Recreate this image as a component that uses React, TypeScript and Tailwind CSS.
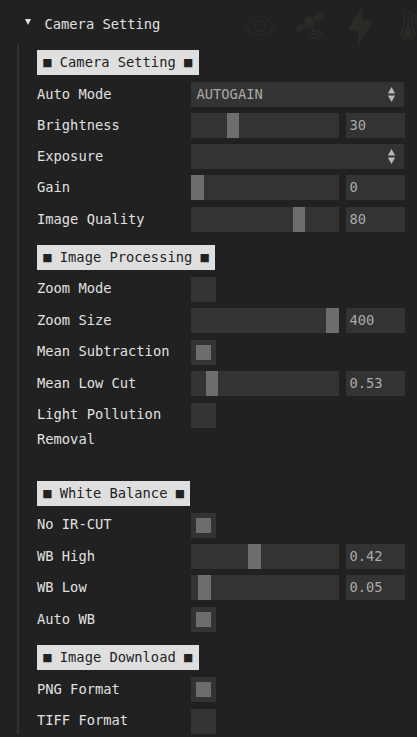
import type { ReactNode } from "react";

function Heading({ children, className }: { children: ReactNode; className: string }) {
  return (
    <div className={"flex " + className}>
      <h2 className="h-[25px] whitespace-pre bg-[#dfdfdf] px-[6.25px] leading-[25px] text-[#222]">■ {children} ■</h2>
    </div>
  );
}

function Row({ label, className, raised = false, children }: { label: string; className: string; raised?: boolean; children: ReactNode }) {
  return (
    <div className={"flex items-start " + className}>
      <div className={"w-[154px] shrink-0 pr-2 leading-[25px] " + (raised ? "-mt-px" : "")}>{label}</div>
      {children}
    </div>
  );
}

function Slider({ left, width = 12, value }: { left: number; width?: number; value: string }) {
  return (
    <div className="flex gap-[7px]">
      <div className="h-[25px] w-[148px] bg-[#333]">
        <div className="h-full bg-[#6d6d6d]" style={{ marginLeft: left, width }} />
      </div>
      <div className="h-[25px] w-[59px] bg-[#333] pl-[3.5px] leading-[25px] text-[#aaa]">{value}</div>
    </div>
  );
}

function Select({ value }: { value: string }) {
  return (
    <div className="flex h-[25px] w-[213px] items-center justify-between bg-[#333] pl-[5.5px] pr-[9px] text-[#aaa]">
      <span className="leading-[25px]">{value}</span>
      <svg width="7" height="15" viewBox="0 0 7 15" fill="#b8b8b8">
        <path d="M3.5 0L7.200 6.500H-0.200z" />
        <path d="M3.5 15L7.200 8.500H-0.200z" />
      </svg>
    </div>
  );
}

function Check({ on = false }: { on?: boolean }) {
  return (
    <div className="flex h-[25px] w-[25px] items-center justify-center bg-[#333]">
      {on && <div className="h-[15px] w-[15px] bg-[#6d6d6d]" />}
    </div>
  );
}

function FaintIcons() {
  return (
    <svg className="absolute left-[240px] top-0" width="177" height="50" viewBox="240 0 177 50" fill="none" stroke="#282926" strokeWidth="1.7">
      <path d="M245.5 26C253 14 267 14 274.500 26C267 38 253 38 245.500 26Z" />
      <circle cx="260" cy="26" r="5.500" />
      <g fill="#282b26" stroke="none">
        <g transform="rotate(-30 310 22)">
          <rect x="305" y="16.500" width="8.500" height="11" rx="1.500" />
          <rect x="294.500" y="19.300" width="9.500" height="5.500" />
          <rect x="314.500" y="19.300" width="11" height="5.500" />
          <rect x="303" y="21" width="13" height="2" />
        </g>
        <circle cx="313.500" cy="30" r="2" />
        <path d="M362 6L347.500 30H358L358.500 46L373 20.500H362.500Z" />
      </g>
      <path d="M311 34Q317.500 35 318.500 29M310 38.200Q321.500 39 322.500 30" stroke="#282b26" />
      <path d="M404 28V15Q404 12 408 12Q412 12 412 15V28A6.800 6.800 0 1 1 404 28Z" stroke="#282b26" />
      <circle cx="408" cy="33.500" r="4.300" fill="#282b26" stroke="none" />
      <path d="M408 16V32M414.500 14.500H417M414.500 18.500H417M414.500 22.500H417M414.500 26.500H417" stroke="#282b26" />
    </svg>
  );
}

export default function App() {
  return (
    <div className="h-[738px] w-[417px] bg-white">
      <div className="relative h-[737px] overflow-hidden bg-[#212121] font-['DejaVu_Sans_Mono','Liberation_Mono',monospace] text-[13.75px] text-[#e0e0e0]">
        <FaintIcons />
        <div className="flex h-[44px] items-center pl-[25px]">
          <svg className="mr-[13.5px]" width="6" height="6" viewBox="0 0 6 6" fill="#e0e0e0">
            <path d="M0 0H6L3 6Z" />
          </svg>
          <span className="mt-[4px] leading-[25px]">Camera Setting</span>
        </div>
        <div className="ml-[17px] h-[690px] border-l-2 border-[#333] pl-[18px] pt-[6px]">
          <Heading className="h-[32px]">Camera Setting</Heading>
          <Row className="h-[31px]" label="Auto Mode"><Select value="AUTOGAIN" /></Row>
          <Row className="h-[31px]" label="Brightness"><Slider left={36} value="30" /></Row>
          <Row className="h-[31px]" label="Exposure"><Select value="" /></Row>
          <Row className="h-[32px]" label="Gain"><Slider left={0} width={13} value="0" /></Row>
          <Row className="h-[38px]" label="Image Quality"><Slider left={102} value="80" /></Row>
          <Heading className="h-[32px]">Image Processing</Heading>
          <Row raised className="h-[31px]" label="Zoom Mode"><Check /></Row>
          <Row className="h-[32px]" label="Zoom Size"><Slider left={135} width={13} value="400" /></Row>
          <Row raised className="h-[31px]" label="Mean Subtraction"><Check on /></Row>
          <Row className="h-[32px]" label="Mean Low Cut"><Slider left={15} value="0.53" /></Row>
          <Row raised className="h-[78px]" label="Light Pollution Removal"><Check /></Row>
          <Heading className="h-[32px]">White Balance</Heading>
          <Row raised className="h-[31px]" label="No IR-CUT"><Check on /></Row>
          <Row className="h-[31px]" label="WB High"><Slider left={57} width={13} value="0.42" /></Row>
          <Row className="h-[32px]" label="WB Low"><Slider left={7} width={13} value="0.05" /></Row>
          <Row className="h-[38px]" label="Auto WB"><Check on /></Row>
          <Heading className="h-[32px]">Image Download</Heading>
          <Row className="h-[32px]" label="PNG Format"><Check on /></Row>
          <Row raised className="h-[25px]" label="TIFF Format"><Check /></Row>
        </div>
      </div>
    </div>
  );
}
